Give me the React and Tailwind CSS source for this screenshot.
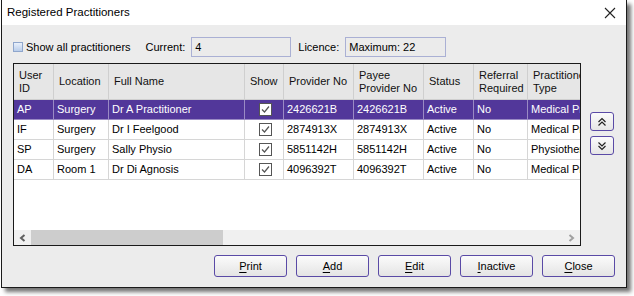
const columns = [
  { key: 'id', label: ['User', 'ID'] },
  { key: 'location', label: ['Location'] },
  { key: 'name', label: ['Full Name'] },
  { key: 'show', label: ['Show'] },
  { key: 'provider', label: ['Provider No'] },
  { key: 'payee', label: ['Payee', 'Provider No'] },
  { key: 'status', label: ['Status'] },
  { key: 'referral', label: ['Referral', 'Required'] },
  { key: 'type', label: ['Practitioner', 'Type'] },
];

const rows = [
  { id: 'AP', location: 'Surgery', name: 'Dr A Practitioner', provider: '2426621B', payee: '2426621B', status: 'Active', referral: 'No', type: 'Medical Practitioner' },
  { id: 'IF', location: 'Surgery', name: 'Dr I Feelgood', provider: '2874913X', payee: '2874913X', status: 'Active', referral: 'No', type: 'Medical Practitioner' },
  { id: 'SP', location: 'Surgery', name: 'Sally Physio', provider: '5851142H', payee: '5851142H', status: 'Active', referral: 'No', type: 'Physiotherapist' },
  { id: 'DA', location: 'Room 1', name: 'Dr Di Agnosis', provider: '4096392T', payee: '4096392T', status: 'Active', referral: 'No', type: 'Medical Practitioner' },
];

const gridCols = 'grid grid-cols-[40px_55px_136px_39px_70px_70px_50px_54px_110px] w-max';

const CheckMark = () => (
  <span className="flex h-[13px] w-[13px] items-center justify-center border border-[#555] bg-white">
    <svg width="11" height="11" viewBox="0 0 11 11">
      <polyline points="2,5.5 4.5,8 9,2.5" fill="none" stroke="#555" strokeWidth="1.2" />
    </svg>
  </span>
);

const WinButton = ({ label }) => (
  <button className="flex h-[22px] w-[73px] items-center justify-center rounded-[3px] border border-[#5a4aa6] bg-gradient-to-b from-[#fbfbfb] to-[#e4e4e4] text-[11px] text-black">
    <span className="underline decoration-1 underline-offset-[2px]">{label[0]}</span>
    {label.slice(1)}
  </button>
);

const MoveButton = ({ up }) => (
  <button className="flex h-[19px] w-[24px] items-center justify-center rounded-[3px] border border-[#5a4aa6] bg-gradient-to-b from-[#fbfbfb] to-[#e6e6e6]">
    <svg width="10" height="10" viewBox="0 0 10 10">
      <g fill="none" stroke="#222" strokeWidth="1.2" transform={up ? '' : 'rotate(180 5 5)'}>
        <polyline points="1.5,5 5,1.5 8.5,5" />
        <polyline points="1.5,8.5 5,5 8.5,8.5" />
      </g>
    </svg>
  </button>
);

export default function App() {
  return (
    <div className="h-[296px] w-[634px] overflow-hidden bg-white font-['Liberation_Sans',Arial,sans-serif] text-[11px] text-black">
      <div className="ml-[1px] flex h-[288px] w-[626px] flex-col border border-t-0 border-[#1a1a1a] shadow-[4px_4px_4px_rgba(0,0,0,0.55)]">
        <div className="flex h-[25px] items-center justify-between bg-white pl-[5px] pr-[10px]">
          <span className="text-[11.5px]">Registered Practitioners</span>
          <svg width="12" height="12" viewBox="0 0 12 12">
            <path d="M1 1 L11 11 M11 1 L1 11" stroke="#222" strokeWidth="1.1" />
          </svg>
        </div>

        <div className="flex flex-1 flex-col bg-[#ececec] pl-[11px] pr-[11px] pt-[12px]">
          <div className="flex h-[20px] items-center">
            <span className="h-[10px] w-[10px] border border-[#8fa6cc] bg-gradient-to-b from-[#e9f0fb] to-[#b9cdea]" />
            <span className="ml-[3px]">Show all practitioners</span>
            <span className="ml-[15px]">Current:</span>
            <div className="ml-[6px] flex h-[20px] w-[100px] items-center border border-[#aab0d4] bg-[#ebebeb] pl-[3px]">4</div>
            <span className="ml-[7px]">Licence:</span>
            <div className="ml-[6px] flex h-[20px] w-[101px] items-center border border-[#aab0d4] bg-[#ebebeb] pl-[3px]">Maximum: 22</div>
          </div>

          <div className="mt-[6px] flex">
            <div className="flex h-[183px] w-[568px] flex-col border border-[#1a1a1a] bg-white">
              <div className="flex-1 overflow-hidden">
                <div className={`${gridCols} h-[36px] bg-[#e6e6e6]`}>
                  {columns.map((c) => (
                    <div key={c.key} className="flex flex-col justify-center border-b border-r border-[#cfcfcf] pl-[5px] leading-[13px] text-[#111]">
                      {c.label.map((l) => (
                        <span key={l} className="whitespace-nowrap">{l}</span>
                      ))}
                    </div>
                  ))}
                </div>
                {rows.map((r, i) => {
                  const sel = i === 0;
                  return (
                    <div key={r.id} className={`${gridCols} h-[20px] ${sel ? 'bg-[#52379a] text-white' : 'bg-white'}`}>
                      {columns.map((c) => (
                        <div
                          key={c.key}
                          className={`flex items-center whitespace-nowrap border-b border-r pl-[3px] ${sel ? 'border-[#9a8ac4]' : 'border-[#d6d6d6]'} ${c.key === 'show' ? 'justify-center pl-0' : ''}`}
                        >
                          {c.key === 'show' ? <CheckMark /> : r[c.key]}
                        </div>
                      ))}
                    </div>
                  );
                })}
              </div>
              <div className="flex h-[15px] items-center bg-[#f0f0f0]">
                <span className="flex w-[17px] justify-center">
                  <svg width="7" height="8" viewBox="0 0 7 8">
                    <polyline points="5.5,1 2,4 5.5,7" fill="none" stroke="#606060" strokeWidth="2" />
                  </svg>
                </span>
                <span className="h-[15px] w-[192px] bg-[#cdcdcd]" />
                <span className="flex-1" />
                <span className="flex w-[17px] justify-center">
                  <svg width="7" height="8" viewBox="0 0 7 8">
                    <polyline points="1.5,1 5,4 1.5,7" fill="none" stroke="#a0a0a0" strokeWidth="2" />
                  </svg>
                </span>
              </div>
            </div>
            <div className="ml-[9px] mt-[49px] flex flex-col gap-[5px]">
              <MoveButton up />
              <MoveButton />
            </div>
          </div>

          <div className="mt-[9px] flex justify-end gap-[9px]">
            {['Print', 'Add', 'Edit', 'Inactive', 'Close'].map((b) => (
              <WinButton key={b} label={b} />
            ))}
          </div>
        </div>
      </div>
    </div>
  );
}
